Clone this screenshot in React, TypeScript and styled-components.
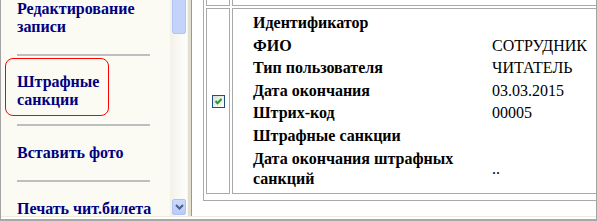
import React from "react";
import styled, { createGlobalStyle } from "styled-components";

const GlobalStyle = createGlobalStyle`
  html, body {
    margin: 0;
    padding: 0;
    background: #ffffff;
    overflow: hidden;
  }
`;

const Window = styled.div`
  width: 597px;
  height: 221px;
  box-sizing: border-box;
  border-left: 1px solid #a3a3a3;
  border-right: 1px solid #a3a3a3;
  border-bottom: 2px solid #a8a8a8;
  display: flex;
  flex-direction: column;
  overflow: hidden;
  font-family: "Liberation Serif", "Times New Roman", serif;
`;

const Body = styled.div`
  display: flex;
  height: 216px;
`;

const BottomEdge = styled.div`
  height: 3px;
  box-sizing: border-box;
  border-top: 1px solid #ecebdc;
  background: #ffffff;
`;

const LeftPane = styled.div`
  width: 169px;
  background: #fbfbf4;
  overflow: hidden;
`;

const Menu = styled.div`
  display: flex;
  flex-direction: column;
  margin-top: -18px;
`;

const MenuItem = styled.div<{ $selected?: boolean }>`
  color: #000080;
  font-weight: bold;
  font-size: 16px;
  line-height: 18px;
  margin-left: 4px;
  border: 1px solid ${(p) => (p.$selected ? "#ff0000" : "transparent")};
  border-radius: ${(p) => (p.$selected ? "8px" : "0")};
  width: ${(p) => (p.$selected ? "104px" : "auto")};
  box-sizing: border-box;
  padding: ${(p) => (p.$selected ? "14px 11px 6px" : "17px 4px 17px 11px")};
  margin-top: ${(p) => (p.$selected ? "2px" : "0")};
  margin-bottom: ${(p) => (p.$selected ? "8px" : "0")};
`;

const Separator = styled.div`
  height: 2px;
  width: 133px;
  margin-left: 16px;
  background: #bebebe;
`;

const Scrollbar = styled.div`
  width: 17px;
  background: linear-gradient(to right, #f3f1ea, #fefefb);
  display: flex;
  flex-direction: column;
  justify-content: space-between;
`;

const Thumb = styled.div`
  height: 34px;
  margin: 0 1px 0 2px;
  box-sizing: border-box;
  background: #c3d3fc;
  border: 1px solid #b0c4f2;
  border-top: none;
  border-radius: 0 0 3px 3px;
`;

const DownButton = styled.div`
  height: 16px;
  margin: 0 1px 1px 2px;
  box-sizing: border-box;
  background: linear-gradient(to bottom, #cbd9fd, #b8ccfa);
  border: 1px solid #afc3f1;
  border-radius: 2px;
  display: flex;
  align-items: center;
  justify-content: center;
`;

const Splitter = styled.div`
  width: 5px;
  box-sizing: border-box;
  border-left: 1px solid #f7f6ee;
  border-right: 1px solid #9c998c;
  background: #e3e0d2;
`;

const RightPane = styled.div`
  flex: 1;
  background: #ffffff;
  overflow: hidden;
`;

const TableBox = styled.div`
  width: 700px;
  margin-left: 11px;
  box-sizing: border-box;
  border-left: 1px solid #a9a9a9;
  border-bottom: 1px solid #a9a9a9;
  padding: 0 0 6px 2px;
  display: flex;
  flex-direction: column;
  gap: 2px;
`;

const Row = styled.div<{ $h: number }>`
  display: flex;
  gap: 2px;
  height: ${(p) => p.$h}px;
`;

const Cell = styled.div<{ $narrow?: boolean; $open?: boolean }>`
  box-sizing: border-box;
  border: 1px solid #a9a9a9;
  border-top: ${(p) => (p.$open ? "none" : "1px solid #a9a9a9")};
  width: ${(p) => (p.$narrow ? "24px" : "auto")};
  flex: ${(p) => (p.$narrow ? "0 0 24px" : "1")};
`;

const CheckCell = styled(Cell)`
  display: flex;
  align-items: center;
  justify-content: center;
`;

const InfoCell = styled(Cell)`
  padding: 4px 0 0 20px;
`;

const InfoGrid = styled.div`
  display: grid;
  grid-template-columns: 239px auto;
  row-gap: 2.6px;
  align-items: center;
  color: #000000;
  font-size: 16px;
  line-height: 20px;
`;

const Label = styled.div`
  font-weight: bold;
`;

const Value = styled.div`
  font-weight: normal;
`;

const menu = [
  { text: "Редактирование записи" },
  { text: "Штрафные санкции", selected: true },
  { text: "Вставить фото" },
  { text: "Печать чит.билета" },
];

const fields: [string, string][] = [
  ["Идентификатор", ""],
  ["ФИО", "СОТРУДНИК"],
  ["Тип пользователя", "ЧИТАТЕЛЬ"],
  ["Дата окончания", "03.03.2015"],
  ["Штрих-код", "00005"],
  ["Штрафные санкции", ""],
  ["Дата окончания штрафных санкций", ".."],
];

function Checkbox() {
  return (
    <svg width="13" height="13" viewBox="0 0 13 13">
      <defs>
        <linearGradient id="cbg" x1="0" y1="0" x2="1" y2="1">
          <stop offset="0" stopColor="#dcdcd7" />
          <stop offset="1" stopColor="#ffffff" />
        </linearGradient>
      </defs>
      <rect x="0.5" y="0.5" width="12" height="12" fill="url(#cbg)" stroke="#1c5180" />
      <polyline points="3.5,6 5.5,8.2 9.5,4" fill="none" stroke="#21a121" strokeWidth="2" />
    </svg>
  );
}

function ChevronDown() {
  return (
    <svg width="9" height="6" viewBox="0 0 9 6">
      <polyline points="1,1 4.5,4.5 8,1" fill="none" stroke="#4d6185" strokeWidth="2" />
    </svg>
  );
}

export default function App() {
  return (
    <>
      <GlobalStyle />
      <Window>
        <Body>
          <LeftPane>
            <Menu>
              {menu.map((m, i) => (
                <React.Fragment key={m.text}>
                  {i > 0 && <Separator />}
                  <MenuItem $selected={m.selected}>{m.text}</MenuItem>
                </React.Fragment>
              ))}
            </Menu>
          </LeftPane>
          <Scrollbar>
            <Thumb />
            <DownButton>
              <ChevronDown />
            </DownButton>
          </Scrollbar>
          <Splitter />
          <RightPane>
            <TableBox>
              <Row $h={6}>
                <Cell $narrow $open />
                <Cell $open />
              </Row>
              <Row $h={186}>
                <CheckCell $narrow>
                  <Checkbox />
                </CheckCell>
                <InfoCell>
                  <InfoGrid>
                    {fields.map(([label, value]) => (
                      <React.Fragment key={label}>
                        <Label>{label}</Label>
                        <Value>{value}</Value>
                      </React.Fragment>
                    ))}
                  </InfoGrid>
                </InfoCell>
              </Row>
            </TableBox>
          </RightPane>
        </Body>
        <BottomEdge />
      </Window>
    </>
  );
}
